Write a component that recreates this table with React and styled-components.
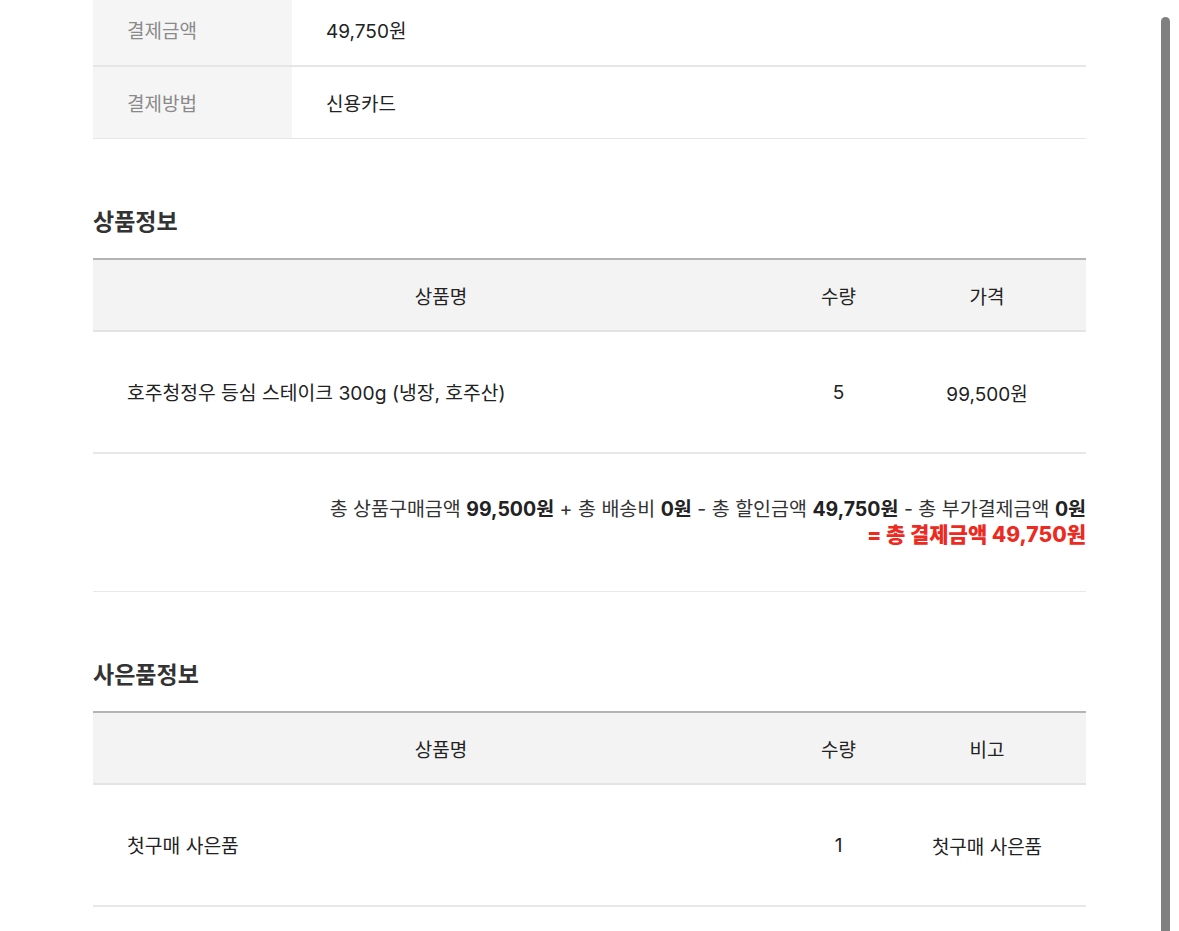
import styled, { createGlobalStyle } from "styled-components";

const GlobalStyle = createGlobalStyle`
    html, body {
        margin: 0;
        padding: 0;
        background: #fff;
        overflow: hidden;
    }
    body {
        font-family: Inter, "Noto Sans CJK KR", sans-serif;
        color: #222;
        -webkit-font-smoothing: antialiased;
    }
`;

const payInfo = [
    { label: "결제금액", value: "49,750원", first: true },
    { label: "결제방법", value: "신용카드" },
];

const products = [
    { name: "호주청정우 등심 스테이크 300g (냉장, 호주산)", qty: 5, extra: "99,500원" },
];

const gifts = [
    { name: "첫구매 사은품", qty: 1, extra: "첫구매 사은품" },
];

const App = () => {
    return (
        <Page>
            <GlobalStyle />
            <InfoTable>
                {payInfo.map((row) => (
                    <InfoRow key={row.label} $first={row.first}>
                        <InfoLabel>{row.label}</InfoLabel>
                        <InfoValue>{row.value}</InfoValue>
                    </InfoRow>
                ))}
            </InfoTable>

            <SectionTitle>상품정보</SectionTitle>
            <Table>
                <HeadRow>
                    <HeadCell>상품명</HeadCell>
                    <HeadCell>수량</HeadCell>
                    <HeadCell>가격</HeadCell>
                </HeadRow>
                {products.map((p) => (
                    <BodyRow key={p.name}>
                        <NameCell>{p.name}</NameCell>
                        <Cell>{p.qty}</Cell>
                        <Cell>{p.extra}</Cell>
                    </BodyRow>
                ))}
            </Table>
            <Summary>
                <SummaryLine>
                    총 상품구매금액 <b>99,500원</b> + 총 배송비 <b>0원</b> - 총 할인금액 <b>49,750원</b> - 총 부가결제금액 <b>0원</b>
                </SummaryLine>
                <TotalLine>= 총 결제금액 49,750원</TotalLine>
            </Summary>

            <SectionTitle>사은품정보</SectionTitle>
            <Table>
                <HeadRow>
                    <HeadCell>상품명</HeadCell>
                    <HeadCell>수량</HeadCell>
                    <HeadCell>비고</HeadCell>
                </HeadRow>
                {gifts.map((g) => (
                    <BodyRow key={g.name}>
                        <NameCell>{g.name}</NameCell>
                        <Cell>{g.qty}</Cell>
                        <Cell>{g.extra}</Cell>
                    </BodyRow>
                ))}
            </Table>

            <ScrollThumb />
        </Page>
    );
};

const Page = styled.div`
    width: 993px;
    margin: -6px auto 0;
    font-size: 19px;
    padding-bottom: 80px;
`;

const InfoTable = styled.div`
    display: flex;
    flex-direction: column;
`;

const InfoRow = styled.div`
    display: grid;
    grid-template-columns: 199px 1fr;
    height: 71px;
    border-bottom: ${(p) => (p.$first ? "2px solid #e6e6e6" : "1px solid #e6e6e6")};
`;

const InfoLabel = styled.div`
    display: flex;
    align-items: center;
    padding-left: 34px;
    background: #f5f5f5;
    color: #8a8a8a;
`;

const InfoValue = styled.div`
    display: flex;
    align-items: center;
    padding-left: 34px;
    color: #222;
`;

const SectionTitle = styled.h3`
    margin: 68px 0 21px;
    font-size: 23px;
    line-height: 30px;
    font-weight: 700;
    color: #333;
`;

const Table = styled.div`
    border-top: 2px solid #b4b4b4;
`;

const cols = `
    display: grid;
    grid-template-columns: 696px 99px 1fr;
`;

const HeadRow = styled.div`
    ${cols}
    height: 70px;
    background: #f3f3f3;
    border-bottom: 2px solid #e4e4e4;
`;

const HeadCell = styled.div`
    display: flex;
    align-items: center;
    justify-content: center;
    color: #222;
`;

const BodyRow = styled.div`
    ${cols}
    height: 120px;
    border-bottom: 2px solid #e8e8e8;
`;

const Cell = styled.div`
    display: flex;
    align-items: center;
    justify-content: center;
    color: #222;
`;

const NameCell = styled(Cell)`
    justify-content: flex-start;
    padding-left: 34px;
    font-size: 19.3px;
`;

const Summary = styled.div`
    padding: 42px 0 43px;
    text-align: right;
    border-bottom: 1px solid #e8e8e8;
    line-height: 26px;
    font-size: 19.5px;
    color: #333;

    b {
        font-weight: 700;
        color: #222;
    }
`;

const SummaryLine = styled.div``;

const TotalLine = styled.div`
    font-size: 21px;
    font-weight: 800;
    color: #ec2a1f;
`;

const ScrollThumb = styled.div`
    position: fixed;
    top: 17px;
    right: 9px;
    bottom: -10px;
    width: 9px;
    border-radius: 5px;
    background: #808080;
`;

export default App;
